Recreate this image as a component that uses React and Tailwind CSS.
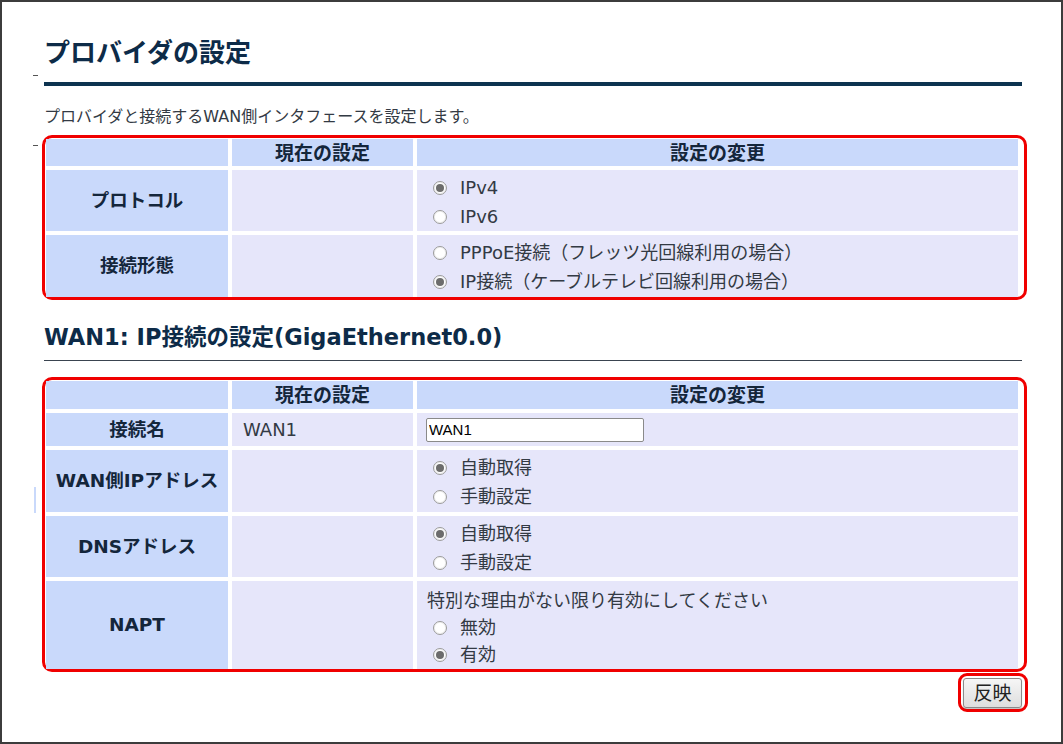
import React from 'react';

const Radio = ({ checked }) => (
  <span className="inline-flex h-[14px] w-[14px] shrink-0 items-center justify-center rounded-full border border-[#9a9a9a] bg-white shadow-[inset_0_0_0_1px_#f0f0f0]">
    {checked && <span className="h-[8px] w-[8px] rounded-full bg-[#6c6c6c]" />}
  </span>
);

const Option = ({ checked, children }) => (
  <div className="flex h-[29px] items-center gap-[13px] pl-[6px]">
    <Radio checked={checked} />
    <span>{children}</span>
  </div>
);

const Label = ({ children }) => (
  <div className="flex items-center justify-center bg-[#c9d9fb] text-[18.5px] font-bold text-[#14263b]">{children}</div>
);

const Cur = ({ children }) => (
  <div className="flex items-center bg-[#e6e6fa] pl-[11px]">{children}</div>
);

const Change = ({ children, pt = 'pt-[3px]' }) => (
  <div className={`flex flex-col justify-center bg-[#e6e6fa] pl-[10px] ${pt}`}>{children}</div>
);

const Header = () => (
  <>
    <div className="bg-[#c9d9fb]" />
    <div className="flex items-center justify-center bg-[#c9d9fb] text-[19px] font-bold text-[#14263b]">現在の設定</div>
    <div className="flex items-center justify-center bg-[#c9d9fb] text-[19px] font-bold text-[#14263b]">設定の変更</div>
  </>
);

const App = () => {
  return (
    <div className="relative box-border h-[744px] w-[1063px] overflow-hidden border-2 border-[#3c3c3c] bg-white font-['DejaVu_Sans','Noto_Sans_CJK_JP',sans-serif] text-[#333a44]">
      <span className="absolute left-[31px] top-[73px] h-[1px] w-[5px] bg-[#555]" />
      <span className="absolute left-[31px] top-[143px] h-[1px] w-[5px] bg-[#555]" />
      <span className="absolute left-[32px] top-[485px] h-[26px] w-[2px] bg-[#c9d9fb]" />

      <div className="ml-[42px] w-[978px]">
        <h1 className="mt-[33px] text-[26px] font-bold leading-[36px] text-[#0d2b48]">プロバイダの設定</h1>
        <div className="mt-[11px] h-[4px] bg-[#0d3350]" />
        <p className="mt-[19px] text-[16px] leading-[24px]">プロバイダと接続するWAN側インタフェースを設定します。</p>

        <div className="-ml-[2px] mt-[6px] w-[985px] rounded-[10px] border-[3px] border-[#f00000] pl-[1px] pt-[1px]">
          <div className="grid grid-cols-[182px_181px_601px] grid-rows-[27px_61px_62px] gap-x-[4px] gap-y-[4px] text-[18px] leading-[24px]">
            <Header />
            <Label>プロトコル</Label>
            <Cur />
            <Change>
              <Option checked>IPv4</Option>
              <Option>IPv6</Option>
            </Change>
            <Label>接続形態</Label>
            <Cur />
            <Change>
              <Option>PPPoE接続（フレッツ光回線利用の場合）</Option>
              <Option checked>IP接続（ケーブルテレビ回線利用の場合）</Option>
            </Change>
          </div>
        </div>

        <h2 className="mt-[22px] text-[22.5px] font-bold leading-[30px] text-[#0d2b48]">WAN1: IP接続の設定(GigaEthernet0.0)</h2>
        <div className="mt-[8px] h-[1px] bg-[#3a4450]" />

        <div className="-ml-[2px] mt-[16px] w-[985px] rounded-[10px] border-[3px] border-[#f00000] pl-[1px] pt-[1px]">
          <div className="grid grid-cols-[182px_181px_601px] grid-rows-[28px_33px_62px_61px_88px] gap-x-[4px] gap-y-[4px] text-[18px] leading-[24px]">
            <Header />
            <Label>接続名</Label>
            <Cur>WAN1</Cur>
            <div className="flex items-center bg-[#e6e6fa] pl-[9px]">
              <input
                type="text"
                defaultValue="WAN1"
                className="box-border h-[24px] w-[218px] rounded-[2px] border border-[#8a8a8a] bg-white px-[2px] font-['Liberation_Sans',sans-serif] text-[15px] text-black outline-none"
              />
            </div>
            <Label>WAN側IPアドレス</Label>
            <Cur />
            <Change>
              <Option checked>自動取得</Option>
              <Option>手動設定</Option>
            </Change>
            <Label>DNSアドレス</Label>
            <Cur />
            <Change>
              <Option checked>自動取得</Option>
              <Option>手動設定</Option>
            </Change>
            <Label>NAPT</Label>
            <Cur />
            <Change pt="pt-[6px]">
              <div className="flex h-[29px] items-center">特別な理由がない限り有効にしてください</div>
              <Option>無効</Option>
              <Option checked>有効</Option>
            </Change>
          </div>
        </div>

        <div className="-mr-[6px] mt-[1px] flex justify-end">
          <div className="rounded-[9px] border-[3px] border-[#f00000] pb-[1px] pl-[2px] pr-[3px] pt-[2px]">
            <button className="flex h-[30px] w-[59px] items-center justify-center rounded-[3px] border border-[#8a8a8a] bg-gradient-to-b from-[#f6f6f6] to-[#dedede] text-[19px] text-[#222] shadow-[0_1px_1px_rgba(0,0,0,0.25)]">
              反映
            </button>
          </div>
        </div>
      </div>
    </div>
  );
};

export default App;
